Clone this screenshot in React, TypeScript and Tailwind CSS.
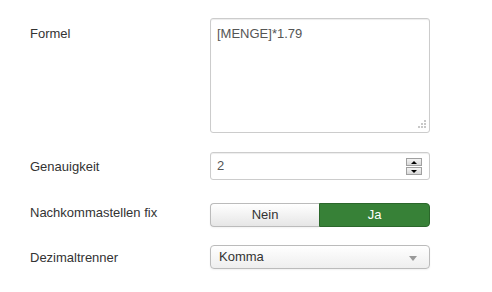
import React from "react";

function Spinner() {
  return (
    <div className="absolute right-[7px] top-[5px] flex flex-col gap-[1px]">
      <div className="w-[16px] h-[8px] border border-[#a0a0a0] bg-gradient-to-b from-[#f4f4f4] to-[#d8d8d8] flex items-center justify-center">
        <div className="w-0 h-0 border-l-[3px] border-r-[3px] border-b-[3px] border-l-transparent border-r-transparent border-b-[#000]" />
      </div>
      <div className="w-[16px] h-[8px] border border-[#a0a0a0] bg-gradient-to-b from-[#f4f4f4] to-[#d8d8d8] flex items-center justify-center">
        <div className="w-0 h-0 border-l-[3px] border-r-[3px] border-t-[3px] border-l-transparent border-r-transparent border-t-[#000]" />
      </div>
    </div>
  );
}

function Grip() {
  return (
    <svg className="absolute right-[2px] bottom-[2px]" width="11" height="11" viewBox="0 0 11 11">
      {[
        [8, 1],
        [5, 4],
        [8, 4],
        [2, 7],
        [5, 7],
        [8, 7],
      ].map(([x, y], i) => (
        <rect key={i} x={x} y={y} width="2" height="2" fill="#c8c8c8" />
      ))}
    </svg>
  );
}

export default function App() {
  return (
    <div
      className="w-[492px] h-[292px] bg-white text-[13px] text-[#333]"
      style={{ fontFamily: '"Liberation Sans", Arial, sans-serif' }}
    >
      <div className="pt-[18px] pl-[30px] flex flex-col">
        <div className="flex">
          <div className="w-[180px] pt-[6px]">Formel</div>
          <div className="relative w-[220px] h-[115px] border border-[#ccc] rounded-[3px] px-[6px] py-[5px] text-[#555] shadow-[inset_0_1px_1px_rgba(0,0,0,0.075)]">
            [MENGE]*1.79
            <Grip />
          </div>
        </div>
        <div className="flex items-center mt-[19px]">
          <div className="w-[180px] mt-[2px]">Genauigkeit</div>
          <div className="relative w-[220px] h-[28px] border border-[#ccc] rounded-[3px] pl-[6px] flex items-center text-[#555] shadow-[inset_0_1px_1px_rgba(0,0,0,0.075)]">
            2
            <Spinner />
          </div>
        </div>
        <div className="flex items-center mt-[23px]">
          <div className="w-[180px] -mt-[5px]">Nachkommastellen fix</div>
          <div className="flex w-[220px] h-[24px]">
            <div className="w-[109px] h-full flex items-center justify-center border border-[#bbb] border-r-0 rounded-l-[4px] bg-gradient-to-b from-[#ffffff] to-[#e6e6e6] text-[#333] shadow-[inset_0_1px_0_rgba(255,255,255,0.2),0_1px_2px_rgba(0,0,0,0.05)]">
              Nein
            </div>
            <div className="flex-1 h-full flex items-center justify-center rounded-r-[4px] bg-[#378137] border border-[#2b672b] text-white">
              Ja
            </div>
          </div>
        </div>
        <div className="flex items-center mt-[18px]">
          <div className="w-[180px] mt-[1px]">Dezimaltrenner</div>
          <div className="relative w-[220px] h-[24px] border border-[#bbb] rounded-[4px] pl-[8px] flex items-center bg-gradient-to-b from-[#ffffff] to-[#eeeeee] text-[#333] shadow-[0_1px_2px_rgba(0,0,0,0.06)]">
            Komma
            <div className="absolute right-[12px] top-[10px] w-0 h-0 border-l-[4px] border-r-[4px] border-t-[5px] border-l-transparent border-r-transparent border-t-[#999]" />
          </div>
        </div>
      </div>
    </div>
  );
}
